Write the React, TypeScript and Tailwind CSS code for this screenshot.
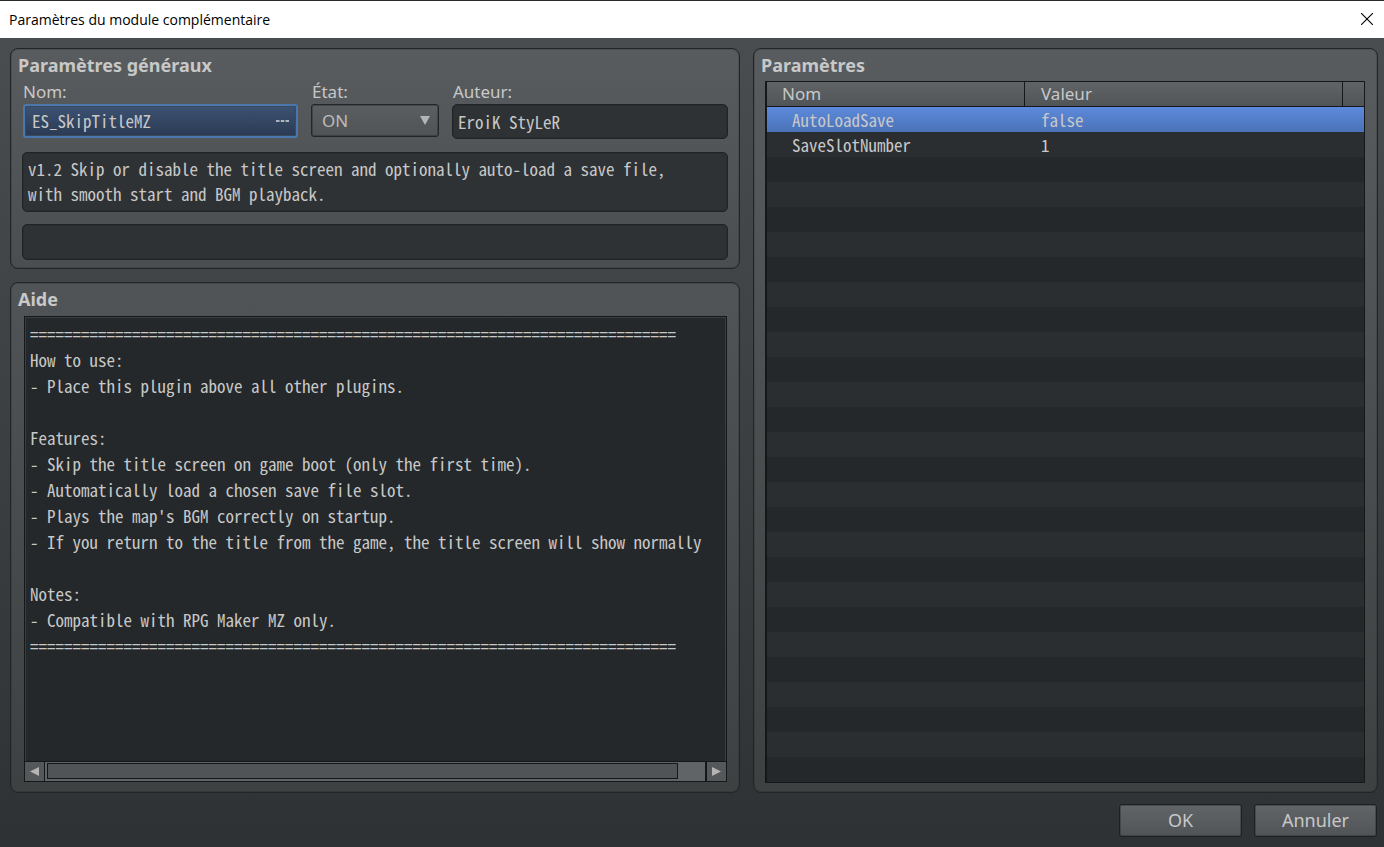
import type { ReactNode } from "react";

const HELP_RULE = "=".repeat(76);

const HELP_TEXT = [
  HELP_RULE,
  "How to use:",
  "- Place this plugin above all other plugins.",
  "",
  "Features:",
  "- Skip the title screen on game boot (only the first time).",
  "- Automatically load a chosen save file slot.",
  "- Plays the map's BGM correctly on startup.",
  "- If you return to the title from the game, the title screen will show normally",
  "",
  "Notes:",
  "- Compatible with RPG Maker MZ only.",
  HELP_RULE,
].join("\n");

const PARAMETERS = [
  { name: "AutoLoadSave", value: "false", selected: true },
  { name: "SaveSlotNumber", value: "1", selected: false },
];

// Half-width Latin forms without ligatures give the fields their fixed pitch.
const MONO =
  "font-['Noto_Sans_CJK_JP',monospace] [font-feature-settings:'hwid','liga'_0] text-[17px]";

const FIELD =
  "block w-full rounded-[5px] border border-[#212425] bg-[#2f3234] px-[5px] text-[#c8c8c8] shadow-[inset_0_0_0_1px_#2a2d2f] outline-none";

const LABEL = "block h-[25px] pl-px text-[17px] leading-[25px]";

function Panel({ title, className, children }: { title: string; className: string; children: ReactNode }) {
  return (
    <section
      className={`flex flex-col rounded-lg border border-[#222425] px-[11px] pt-[3px] shadow-[inset_0_0_0_1px_rgba(0,0,0,0.12)] ${className}`}
    >
      <h2 className="-ml-1 pb-px text-[18px] leading-[26px] font-bold">{title}</h2>
      {children}
    </section>
  );
}

function DialogButton({ children }: { children: ReactNode }) {
  return (
    <button
      type="button"
      className="h-[33px] w-[123px] rounded-[3px] border border-[#1e2123] bg-linear-to-b from-[#616567] to-[#505456] pb-px text-[18px] leading-none shadow-[inset_0_0_0_1px_rgba(30,33,35,0.35)]"
    >
      {children}
    </button>
  );
}

export default function App() {
  return (
    <div className="flex min-h-screen flex-col font-['Noto_Sans',sans-serif] text-[#c8c8c8]">
      <header className="flex h-[38px] shrink-0 items-center justify-between border-t border-[#2b2a2c] bg-white pr-[11px] pb-px pl-[9px] text-black">
        <h1 className="text-[14px] font-['Open_Sans',sans-serif]">Paramètres du module complémentaire</h1>
        <button type="button" aria-label="Fermer">
          <svg width="12" height="12" viewBox="0 0 12 12" fill="none" stroke="currentColor" strokeWidth="1.1">
            <path d="M0 0L12 12M12 0L0 12" />
          </svg>
        </button>
      </header>

      <main className="flex grow flex-col bg-linear-to-b from-[#494d4f] to-[#2f3234] pt-[10px] pr-[6px] pb-[10px] pl-[10px]">
        <div className="grid grow grid-cols-[730fr_625fr] gap-[13px]">
          <div className="flex min-w-0 flex-col gap-[13px]">
            <Panel title="Paramètres généraux" className="bg-linear-to-b from-[#585c5e] to-[#4b4e50] pb-2">
              <div className="flex gap-[13px]">
                <div className="w-[276px]">
                  <label htmlFor="plugin-name" className={LABEL}>
                    Nom:
                  </label>
                  <button
                    id="plugin-name"
                    type="button"
                    className={`ml-px flex h-[34px] w-[275px] items-center justify-between rounded-[3px] border-2 border-[#4a78ae] bg-linear-to-b from-[#3c5372] to-[#2b3a54] px-[7px] pb-px leading-none shadow-[inset_0_0_0_1px_#3f4856] ${MONO}`}
                  >
                    <span>ES_SkipTitleMZ</span>
                    <svg width="13" height="2" viewBox="0 0 13 2" fill="#b0b5bc">
                      <path d="M0 0h3.500v2H0zM4.800 0h3.500v2H4.800zM9.500 0H13v2H9.500z" />
                    </svg>
                  </button>
                </div>
                <div className="w-[128px]">
                  <label htmlFor="plugin-state" className={LABEL}>
                    État:
                  </label>
                  <div className="relative">
                    <select
                      id="plugin-state"
                      defaultValue="ON"
                      className="h-[33px] w-full appearance-none rounded-[3px] border border-[#232627] bg-linear-to-b from-[#5b5f61] to-[#4f5355] pl-[10px] text-[17px] leading-none text-[#bcbcbc] shadow-[inset_0_0_0_1px_rgba(35,38,39,0.4)] outline-none"
                    >
                      <option>ON</option>
                      <option>OFF</option>
                    </select>
                    <svg
                      className="pointer-events-none absolute top-3 right-[9px]"
                      width="10"
                      height="9"
                      viewBox="0 0 10 9"
                      fill="#b4b4b4"
                    >
                      <path d="M0 0h10L5 9z" />
                    </svg>
                  </div>
                </div>
                <div className="min-w-0 grow">
                  <label htmlFor="plugin-author" className={LABEL}>
                    Auteur:
                  </label>
                  <input
                    id="plugin-author"
                    readOnly
                    value="EroiK StyLeR"
                    className={`h-[35px] pb-px ${FIELD} ${MONO}`}
                  />
                </div>
              </div>
              <textarea
                readOnly
                aria-label="Description"
                value={
                  "v1.2 Skip or disable the title screen and optionally auto-load a save file,\nwith smooth start and BGM playback."
                }
                className={`mt-[13px] h-[60px] resize-none overflow-hidden py-[3px] leading-[25px] ${FIELD} ${MONO}`}
              />
              <input readOnly aria-label="URL" value="" className={`mt-3 h-[36px] ${FIELD} ${MONO}`} />
            </Panel>

            <Panel title="Aide" className="grow bg-linear-to-b from-[#505456] to-[#3e4142] pb-[10px]">
              <div className="mt-[3px] mr-px ml-[2px] flex grow flex-col border border-[#15181a] bg-[#24282a]">
                <pre
                  className={`grow overflow-hidden border border-b-0 border-[#3a3e40] pt-[3px] pr-[5px] pl-1 ${MONO}`}
                >
                  <code className={`block overflow-hidden leading-[26px] ${MONO}`}>{HELP_TEXT}</code>
                </pre>
                <div className="flex h-5 shrink-0 border-t border-[#15181a] bg-[#606466]">
                  <button
                    type="button"
                    aria-label="Défiler à gauche"
                    className="flex w-5 items-center justify-center border-r border-[#15181a] bg-[#54585a]"
                  >
                    <svg width="9" height="9" viewBox="0 0 9 9" fill="#b4b4b4">
                      <path d="M9 0v9L0 4.500z" />
                    </svg>
                  </button>
                  <div className="grow pt-px pr-[27px] pb-[2px] pl-[2px]">
                    <div className="h-full border border-[#15181a] bg-[#505456]" />
                  </div>
                  <button
                    type="button"
                    aria-label="Défiler à droite"
                    className="flex w-[21px] items-center justify-center border-l-2 border-[#15181a] bg-[#54585a]"
                  >
                    <svg width="9" height="9" viewBox="0 0 9 9" fill="#b4b4b4">
                      <path d="M0 0v9l9-4.500z" />
                    </svg>
                  </button>
                </div>
              </div>
            </Panel>
          </div>

          <Panel title="Paramètres" className="min-w-0 bg-linear-to-b from-[#585c5e] to-[#3e4142] pb-[9px]">
            <div className="mt-[2px] mr-px grow border border-l-2 border-[#15181a] bg-[repeating-linear-gradient(to_bottom,#2b2e30_0px,#2b2e30_25px,#24282a_25px,#24282a_50px)]">
              <table className="w-full table-fixed border-separate border-spacing-0 text-left">
                <colgroup>
                  <col className="w-[258px]" />
                  <col />
                  <col className="w-[21px]" />
                </colgroup>
                <thead>
                  <tr className="bg-linear-to-b from-[#606466] to-[#505456] text-[17px] leading-[24px]">
                    <th scope="col" className="border-r border-b border-[#15181a] p-0 pl-[15px] font-normal">
                      Nom
                    </th>
                    <th scope="col" className="border-r border-b border-[#15181a] p-0 pl-4 font-normal">
                      Valeur
                    </th>
                    <td className="border-b border-[#15181a] p-0" />
                  </tr>
                </thead>
                <tbody>
                  {PARAMETERS.map((p) => (
                    <tr
                      key={p.name}
                      aria-selected={p.selected}
                      className={`leading-[25px] ${MONO} ${
                        p.selected ? "bg-linear-to-b from-[#5c8adb] to-[#4b72b8]" : "bg-[#2b2e30]"
                      }`}
                    >
                      <td className="p-0 pl-[25px]">{p.name}</td>
                      <td className="p-0 pl-4" colSpan={2}>
                        {p.value}
                      </td>
                    </tr>
                  ))}
                </tbody>
              </table>
            </div>
          </Panel>
        </div>

        <div className="mt-[11px] flex justify-end gap-3 pr-px">
          <DialogButton>OK</DialogButton>
          <DialogButton>Annuler</DialogButton>
        </div>
      </main>
    </div>
  );
}
